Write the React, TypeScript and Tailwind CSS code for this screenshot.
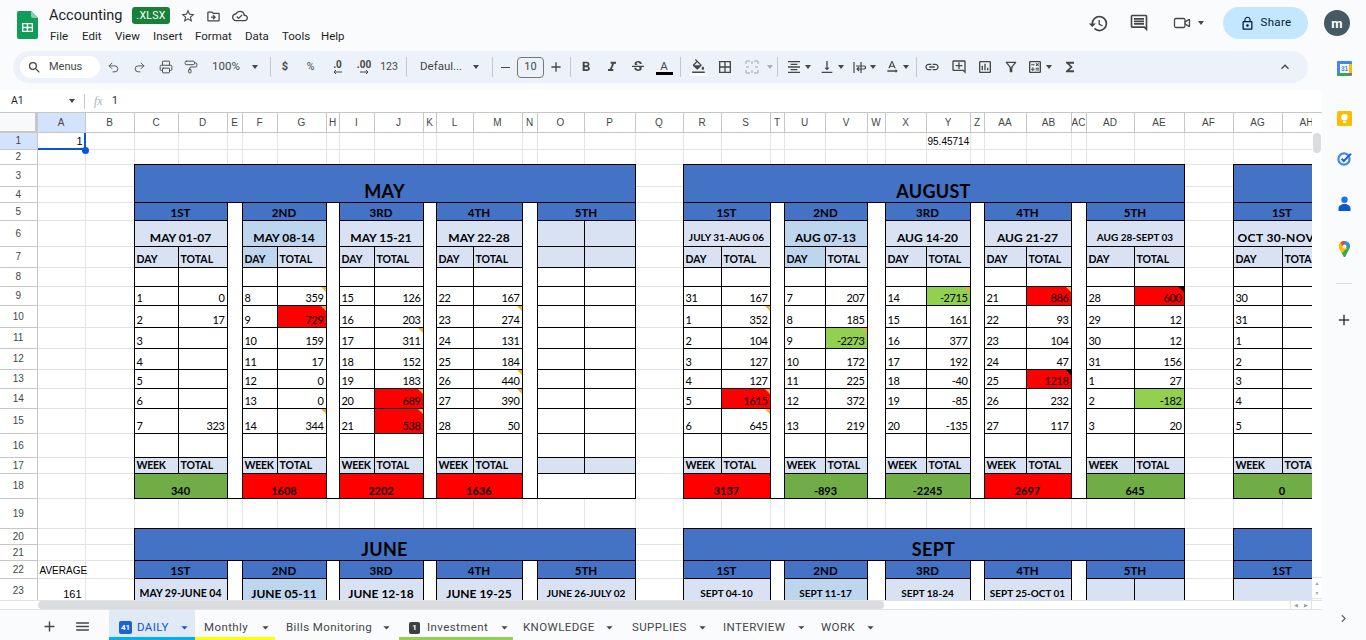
import type { ReactNode } from "react";
import { PaintRoller, Printer, Redo2, Undo2, Video } from "lucide-react";
import {
  MdAdd,
  MdArrowDropDown,
  MdBorderAll,
  MdChevronRight,
  MdExpandLess,
  MdFormatAlignCenter,
  MdFormatBold,
  MdFormatColorFill,
  MdFormatItalic,
  MdFunctions,
  MdHistory,
  MdLink,
  MdLockOutline,
  MdMenu,
  MdOutlineAddComment,
  MdOutlineCalculate,
  MdOutlineCloudDone,
  MdOutlineComment,
  MdOutlineDriveFileMove,
  MdOutlineFilterAlt,
  MdOutlineInsertChart,
  MdSearch,
  MdStarBorder,
  MdStrikethroughS,
  MdTextRotationNone,
  MdVerticalAlignBottom,
} from "react-icons/md";

const COLS = "A B C D E F G H I J K L M N O P Q R S T U V W X Y Z AA AB AC AD AE AF AG AH".split(" ");
const WIDTHS = [
  "w-[48px]", "w-[49px]", "w-[44px]", "w-[49px]", "w-[15px]", "w-[35px]", "w-[49px]", "w-[13px]", "w-[35px]",
  "w-[49px]", "w-[13px]", "w-[37px]", "w-[49px]", "w-[15px]", "w-[47px]", "w-[51px]", "w-[48px]", "w-[38px]",
  "w-[49px]", "w-[14px]", "w-[41px]", "w-[42px]", "w-[18px]", "w-[41px]", "w-[44px]", "w-[14px]", "w-[42px]",
  "w-[45px]", "w-[15px]", "w-[48px]", "w-[50px]", "w-[49px]", "w-[49px]", "w-[49px]",
];
const ROW_H: Record<number, string> = {
  1: "h-[17px]", 2: "h-[15px]", 3: "h-[22px]", 4: "h-[16px]", 5: "h-[18px]", 6: "h-[26px]", 7: "h-[21px]", 8: "h-[19px]",
  9: "h-[19px]", 10: "h-[22px]", 11: "h-[21px]", 12: "h-[21px]", 13: "h-[19px]", 14: "h-[20px]", 15: "h-[25px]",
  16: "h-[24px]", 17: "h-[16px]", 18: "h-[25px]", 19: "h-[30px]", 20: "h-[16px]", 21: "h-[16px]", 22: "h-[18px]", 23: "h-[24px]",
};

const BLUE = "bg-[#4472c4]";
const PALE = "bg-[#d9e2f3]";
const ALT = "bg-[#bdd6ee]";
const box = "border border-double border-black p-0 overflow-hidden";
const light = "border border-solid border-[#e2e3e3] p-0 align-bottom";

type Total = { v: string; f?: string; m?: string };
type Week = {
  head: string;
  date?: string;
  dateSize?: string;
  alt?: boolean;
  days?: string[];
  totals?: Total[];
  sum?: string;
  sumBg?: string;
  blank?: boolean;
};

const n = (v: string, m?: string): Total => ({ v, m });
const red = (v: string, m?: string): Total => ({ v, f: "bg-[#ff0000]", m });
const lime = (v: string, m?: string): Total => ({ v, f: "bg-[#92d050]", m });
const RED = "bg-[#ff0000]";
const GREEN = "bg-[#70ad47]";
const range = (a: number) => Array.from({ length: 7 }, (_, i) => String(a + i));

const MAY: Week[] = [
  { head: "1ST", date: "MAY 01-07", days: range(1), totals: [n("0"), n("17"), n(""), n(""), n(""), n(""), n("323")], sum: "340", sumBg: GREEN },
  { head: "2ND", date: "MAY 08-14", alt: true, days: range(8), totals: [n("359", "o"), red("729", "o"), n("159"), n("17"), n("0"), n("0"), n("344", "o")], sum: "1608", sumBg: RED },
  { head: "3RD", date: "MAY 15-21", days: range(15), totals: [n("126"), n("203"), n("311", "o"), n("152"), n("183"), red("689", "o"), red("538", "o")], sum: "2202", sumBg: RED },
  { head: "4TH", date: "MAY 22-28", days: range(22), totals: [n("167"), n("274", "o"), n("131"), n("184"), n("440", "o"), n("390", "o"), n("50")], sum: "1636", sumBg: RED },
  { head: "5TH", blank: true },
];
const AUGUST: Week[] = [
  { head: "1ST", date: "JULY 31-AUG 06", dateSize: "text-[10px]", days: ["31", "1", "2", "3", "4", "5", "6"], totals: [n("167"), n("352", "o"), n("104"), n("127"), n("127"), red("1615", "o"), n("645", "o")], sum: "3137", sumBg: RED },
  { head: "2ND", date: "AUG 07-13", alt: true, days: range(7), totals: [n("207"), n("185"), lime("-2273", "o"), n("172"), n("225"), n("372"), n("219")], sum: "-893", sumBg: GREEN },
  { head: "3RD", date: "AUG 14-20", days: range(14), totals: [lime("-2715", "o"), n("161"), n("377"), n("192"), n("-40"), n("-85"), n("-135")], sum: "-2245", sumBg: GREEN },
  { head: "4TH", date: "AUG 21-27", days: range(21), totals: [red("886", "o"), n("93"), n("104"), n("47"), red("1218", "k"), n("232"), n("117")], sum: "2697", sumBg: RED },
  { head: "5TH", date: "AUG 28-SEPT 03", dateSize: "text-[10px]", days: ["28", "29", "30", "31", "1", "2", "3"], totals: [red("600", "k"), n("12"), n("12"), n("156"), n("27"), lime("-182"), n("20")], sum: "645", sumBg: GREEN },
];
const OCT: Week[] = [
  { head: "1ST", date: "OCT 30-NOV", dateSize: "text-[12px] text-left pl-[4px] tracking-[0.4px]", days: ["30", "31", "1", "2", "3", "4", "5"], totals: [n(""), n(""), n(""), n(""), n(""), n(""), n("")], sum: "0", sumBg: GREEN },
];
const JUNE: Week[] = [
  { head: "1ST", date: "MAY 29-JUNE 04", dateSize: "text-[10.5px]" },
  { head: "2ND", date: "JUNE 05-11", alt: true },
  { head: "3RD", date: "JUNE 12-18" },
  { head: "4TH", date: "JUNE 19-25" },
  { head: "5TH", date: "JUNE 26-JULY 02", dateSize: "text-[10px]" },
];
const SEPT: Week[] = [
  { head: "1ST", date: "SEPT 04-10", dateSize: "text-[10px]" },
  { head: "2ND", date: "SEPT 11-17", dateSize: "text-[10px]", alt: true },
  { head: "3RD", date: "SEPT 18-24", dateSize: "text-[10px]" },
  { head: "4TH", date: "SEPT 25-OCT 01", dateSize: "text-[10px]" },
  { head: "5TH", blank: true },
];
const NEXT: Week[] = [{ head: "1ST", date: "" }];

function Mark({ kind }: { kind?: string }) {
  if (kind === "o")
    return <span className="absolute top-0 right-0 border-t-[5px] border-l-[5px] border-t-[#f5b324] border-l-transparent" />;
  if (kind === "k")
    return <span className="absolute top-0 right-0 border-t-[5px] border-l-[5px] border-t-black border-l-transparent" />;
  return null;
}

// one table row of a month block; top blocks run rows 3-18, bottom blocks 20-23
function blockCells(title: string, span: number, weeks: Week[], row: number, bottom: boolean): ReactNode[] {
  const r = bottom ? row - 17 : row;
  const out: ReactNode[] = [];
  if (r === 3) {
    out.push(
      <td key="title" colSpan={span} rowSpan={2} className={`${box} ${BLUE} align-bottom text-center`}>
        <div className="font-bold text-[18px] leading-[21px] text-black tracking-[0.3px]">{title}</div>
      </td>,
    );
    return out;
  }
  if (r === 4) return out;

  weeks.forEach((w, i) => {
    const k = `w${i}-`;
    if (r === 5) {
      out.push(
        <td key={k + "h"} colSpan={2} className={`${box} ${BLUE} text-center align-bottom pb-[2px] font-bold text-[11.5px] leading-none text-black`}>
          {w.head}
        </td>,
      );
      if (i < weeks.length - 1) out.push(<td key={k + "g"} rowSpan={bottom ? 2 : 14} className={`${box} bg-white`} />);
    } else if (r === 6) {
      const bg = w.alt ? ALT : PALE;
      if (w.blank) {
        out.push(<td key={k + "a"} className={`${box} ${PALE}`} />, <td key={k + "b"} className={`${box} ${PALE}`} />);
      } else {
        out.push(
          <td key={k + "d"} colSpan={2} className={`${box} ${bg} align-bottom text-center`}>
            <div className={`font-bold ${w.dateSize ?? "text-[12px]"} leading-[13px] pb-[2px] whitespace-nowrap text-black`}>{w.date}</div>
          </td>,
        );
      }
    } else if (r === 7) {
      if (w.blank) {
        out.push(<td key={k + "a"} className={`${box} ${PALE}`} />, <td key={k + "b"} className={`${box} ${PALE}`} />);
      } else {
        out.push(
          <td key={k + "a"} className={`${box} ${w.alt ? ALT : PALE} align-bottom pl-[2px] font-bold text-[10.5px] leading-[13px] pb-[1px] text-black`}>DAY</td>,
          <td key={k + "b"} className={`${box} ${PALE} align-bottom pl-[2px] font-bold text-[10.5px] leading-[13px] pb-[1px] text-black whitespace-nowrap`}>TOTAL</td>,
        );
      }
    } else if (r === 8 || r === 16) {
      out.push(<td key={k + "a"} className={`${box} bg-white`} />, <td key={k + "b"} className={`${box} bg-white`} />);
    } else if (r >= 9 && r <= 15) {
      const t = w.totals?.[r - 9];
      out.push(
        <td key={k + "a"} className={`${box} bg-white align-bottom pl-[2px] text-[11px] leading-[13px] pb-[1px] tracking-[-0.4px] text-black`}>{w.days?.[r - 9]}</td>,
        <td key={k + "b"} className={`${box} ${t?.f ?? "bg-white"} relative align-bottom text-right pr-[2px] text-[11px] leading-[13px] pb-[1px] tracking-[-0.4px] text-black`}>
          {t?.v}
          <Mark kind={t?.m} />
        </td>,
      );
    } else if (r === 17) {
      if (w.blank) {
        out.push(<td key={k + "a"} className={`${box} ${PALE}`} />, <td key={k + "b"} className={`${box} ${PALE}`} />);
      } else {
        out.push(
          <td key={k + "a"} className={`${box} ${PALE} pl-[2px] font-bold text-[10.5px] leading-none tracking-[-0.3px] text-black`}>WEEK</td>,
          <td key={k + "b"} className={`${box} ${PALE} pl-[2px] font-bold text-[10.5px] leading-none text-black whitespace-nowrap`}>TOTAL</td>,
        );
      }
    } else if (r === 18) {
      out.push(
        <td key={k + "s"} colSpan={2} className={`${box} ${w.sumBg ?? "bg-white"} align-bottom text-center font-bold text-[11px] leading-[13px] pb-[1px] text-black`}>
          {w.sum}
        </td>,
      );
    }
  });
  return out;
}

function lightCells(from: number, to: number, row: number): ReactNode[] {
  return COLS.slice(from, to).map((c) => {
    let content: ReactNode = null;
    if (row === 1 && c === "A") content = <div className="text-right pr-[2px] pb-[2px] text-[11px] text-black leading-none">1</div>;
    if (row === 1 && c === "Y") content = <div className="text-[10px] leading-none pb-[2px] pl-[1px] text-black whitespace-nowrap">95.45714</div>;
    if (row === 22 && c === "A") content = <div className="text-[10px] leading-none pb-[2px] pl-[2px] text-black">AVERAGE</div>;
    if (row === 23 && c === "A") content = <div className="text-right pr-[3px] pb-[2px] text-[11px] text-black leading-none">161</div>;
    const selected = row === 1 && c === "A";
    return (
      <td key={c} className={`${light} ${selected ? "relative" : ""} font-['Liberation_Sans',sans-serif]`}>
        {content}
        {selected && (
          <>
            <span className="absolute -right-px -bottom-px top-0 left-0 border-r-2 border-b-2 border-[#0b57d0]" />
            <span className="absolute -right-[4px] -bottom-[5px] w-[7px] h-[7px] rounded-full bg-[#0b57d0]" />
          </>
        )}
      </td>
    );
  });
}

function Grid() {
  const rows = Array.from({ length: 23 }, (_, i) => i + 1);
  return (
    <table className="table-fixed border-collapse w-[1331px] font-['Lato',sans-serif]">
      <colgroup>
        <col className="w-[37px]" />
        {WIDTHS.map((w, i) => (
          <col key={i} className={w} />
        ))}
      </colgroup>
      <tbody>
        <tr className="h-[20px]">
          <td className="p-0 bg-[#f8f9fa] border-t border-[#c7c7c7] shadow-[inset_-2px_-2px_0_#c7c7c7]" />
          {COLS.map((c) => (
            <td
              key={c}
              className={`p-0 border border-[#c7c7c7] text-center text-[10px] leading-none font-['Liberation_Sans',sans-serif] text-[#444746] overflow-hidden ${c === "A" ? "bg-[#d3e3fd]" : "bg-white"}`}
            >
              {c}
            </td>
          ))}
        </tr>
        {rows.map((r) => {
          const head = (
            <td
              key="head"
              className={`p-0 border-r border-b border-solid border-[#c7c7c7] text-center text-[10px] leading-none font-['Liberation_Sans',sans-serif] text-[#444746] ${r === 1 ? "bg-[#d3e3fd]" : "bg-white"}`}
            >
              {r}
            </td>
          );
          if (r <= 2 || r === 19) {
            return (
              <tr key={r} className={ROW_H[r]}>
                {head}
                {lightCells(0, 34, r)}
              </tr>
            );
          }
          const bottom = r >= 20;
          return (
            <tr key={r} className={ROW_H[r]}>
              {head}
              {lightCells(0, 2, r)}
              {blockCells(bottom ? "JUNE" : "MAY", 14, bottom ? JUNE : MAY, r, bottom)}
              {lightCells(16, 17, r)}
              {blockCells(bottom ? "SEPT" : "AUGUST", 14, bottom ? SEPT : AUGUST, r, bottom)}
              {lightCells(31, 32, r)}
              {blockCells("", 2, bottom ? NEXT : OCT, r, bottom)}
            </tr>
          );
        })}
      </tbody>
    </table>
  );
}

function Caret({ className = "" }: { className?: string }) {
  return <span className={`inline-block border-x-[3.5px] border-t-[4px] border-x-transparent border-t-[#444746] ${className}`} />;
}

function Tool({ w, children, ml = "" }: { w: string; children?: ReactNode; ml?: string }) {
  return <div className={`${w} ${ml} h-full flex items-center justify-center shrink-0 text-[#444746]`}>{children}</div>;
}

function Sep({ w }: { w: string }) {
  return (
    <div className={`${w} h-full flex items-center justify-center shrink-0`}>
      <span className="w-px h-[20px] bg-[#c7c7c7]" />
    </div>
  );
}

function Toolbar() {
  const ic = 16;
  return (
    <div className="ml-[13px] w-[1295px] h-[32px] rounded-[16px] bg-[#edf2fa] flex items-center text-[#444746]">
      <div className="ml-[7px] w-[80px] h-[22px] rounded-[11px] bg-white flex items-center shrink-0">
        <MdSearch size={15} className="ml-[7px] text-[#444746]" />
        <span className="ml-[7px] text-[11px] text-[#444746]">Menus</span>
      </div>
      <Tool w="w-[27px]"><Undo2 size={13} strokeWidth={1.6} /></Tool>
      <Tool w="w-[25px]"><Redo2 size={13} strokeWidth={1.6} /></Tool>
      <Tool w="w-[27px]"><Printer size={14} strokeWidth={1.6} /></Tool>
      <Tool w="w-[24px]"><PaintRoller size={14} strokeWidth={1.6} /></Tool>
      <div className="w-[64px] h-full flex items-center shrink-0 pl-[9px]">
        <span className="text-[11.5px]">100%</span>
        <Caret className="ml-[12px]" />
      </div>
      <Sep w="w-[6px]" />
      <Tool w="w-[24px]"><span className="text-[11px] font-bold">$</span></Tool>
      <Tool w="w-[27px]"><span className="text-[10.5px]">%</span></Tool>
      <Tool w="w-[27px]">
        <span className="flex flex-col items-center leading-none">
          <span className="text-[10px] font-bold leading-[9px]">.0</span>
          <svg width="9" height="6" viewBox="0 0 9 6" fill="none" stroke="#444746" strokeWidth="1"><path d="M9 3H1M3 1 1 3l2 2" /></svg>
        </span>
      </Tool>
      <Tool w="w-[26px]">
        <span className="flex flex-col items-center leading-none">
          <span className="text-[10px] font-bold leading-[9px]">.00</span>
          <svg width="9" height="6" viewBox="0 0 9 6" fill="none" stroke="#444746" strokeWidth="1"><path d="M0 3h8M6 1l2 2-2 2" /></svg>
        </span>
      </Tool>
      <Tool w="w-[24px]"><span className="text-[10.5px]">123</span></Tool>
      <Sep w="w-[10px]" />
      <div className="w-[77px] h-full flex items-center shrink-0 pl-[9px]">
        <span className="text-[11.5px] w-[42px]">Defaul...</span>
        <Caret className="ml-[11px]" />
      </div>
      <Sep w="w-[9px]" />
      <Tool w="w-[16px]"><span className="w-[9px] h-px bg-[#444746]" /></Tool>
      <div className="ml-[4px] w-[27px] h-[21px] rounded-[4px] border border-[#747775] flex items-center justify-center text-[11px] shrink-0">10</div>
      <Tool w="w-[24px]"><MdAdd size={ic} /></Tool>
      <Sep w="w-[5px]" />
      <Tool w="w-[26px]"><MdFormatBold size={ic} /></Tool>
      <Tool w="w-[26px]"><MdFormatItalic size={ic} /></Tool>
      <Tool w="w-[26px]"><MdStrikethroughS size={ic} /></Tool>
      <Tool w="w-[26px]">
        <span className="flex flex-col items-center">
          <span className="text-[11.5px] leading-[12px]">A</span>
          <span className="w-[17px] h-[3px] bg-black" />
        </span>
      </Tool>
      <Sep w="w-[7px]" />
      <Tool w="w-[28px]">
        <span className="flex flex-col items-center">
          <MdFormatColorFill size={15} className="-mb-[1px]" />
          <span className="w-[18px] h-[3px] bg-white" />
        </span>
      </Tool>
      <Tool w="w-[26px]"><MdBorderAll size={ic} /></Tool>
      <Tool w="w-[27px]">
        <svg width="14" height="14" viewBox="0 0 14 14" fill="none" stroke="#a3a7ab" strokeWidth="1">
          <path d="M1 4V1h4M9 1h4v3M1 10v3h4M9 13h4v-3M1 7h3M10 7h3M7 1v3M7 10v3" />
        </svg>
      </Tool>
      <Tool w="w-[9px]"><Caret className="opacity-40" /></Tool>
      <Sep w="w-[7px]" />
      <Tool w="w-[20px]" ml="ml-[3px]"><MdFormatAlignCenter size={ic} /></Tool>
      <Tool w="w-[8px]"><Caret /></Tool>
      <Tool w="w-[20px]" ml="ml-[5px]"><MdVerticalAlignBottom size={ic} /></Tool>
      <Tool w="w-[8px]"><Caret /></Tool>
      <Tool w="w-[20px]" ml="ml-[4px]">
        <svg width="13" height="13" viewBox="0 0 13 13" fill="none" stroke="#444746" strokeWidth="1.2">
          <path d="M1 1v11M8 1v11" />
          <path d="M3 5h8a1.500 1.500 0 0 1 0 3H4M6 6 4 8l2 2" />
        </svg>
      </Tool>
      <Tool w="w-[8px]"><Caret /></Tool>
      <Tool w="w-[20px]" ml="ml-[5px]"><MdTextRotationNone size={ic} /></Tool>
      <Tool w="w-[8px]"><Caret /></Tool>
      <Sep w="w-[13px]" />
      <Tool w="w-[18px]"><MdLink size={ic} /></Tool>
      <Tool w="w-[35px]"><MdOutlineAddComment size={ic} /></Tool>
      <Tool w="w-[17px]"><MdOutlineInsertChart size={ic} /></Tool>
      <Tool w="w-[29px]" ml="ml-[3px]"><MdOutlineFilterAlt size={ic} /></Tool>
      <Tool w="w-[20px]"><MdOutlineCalculate size={ic} /></Tool>
      <Tool w="w-[8px]"><Caret /></Tool>
      <Tool w="w-[34px]"><MdFunctions size={ic} /></Tool>
      <Tool w="w-[16px]" ml="ml-auto mr-[15px]"><MdExpandLess size={18} /></Tool>
    </div>
  );
}

function SheetsLogo() {
  return (
    <svg width="21" height="28" viewBox="0 0 21 28" className="shrink-0">
      <path d="M2 0h12l7 7v19a2 2 0 0 1-2 2H2a2 2 0 0 1-2-2V2a2 2 0 0 1 2-2z" fill="#0f9d58" />
      <path d="M14 0l7 7h-5a2 2 0 0 1-2-2z" fill="#87ceac" />
      <path d="M5 12h11v9H5z" fill="#fff" />
      <path d="M6.300 13.300h3.500v2.500H6.300zM11.200 13.300h3.500v2.500h-3.500zM6.300 17.200h3.500v2.500H6.300zM11.200 17.200h3.500v2.500h-3.500z" fill="#0f9d58" />
    </svg>
  );
}

function TopBar() {
  const menu: [string, string][] = [
    ["File", "w-[32px]"],
    ["Edit", "w-[33px]"],
    ["View", "w-[38px]"],
    ["Insert", "w-[42px]"],
    ["Format", "w-[50px]"],
    ["Data", "w-[37px]"],
    ["Tools", "w-[39px]"],
    ["Help", "w-[40px]"],
  ];
  return (
    <div className="h-[51px] flex shrink-0 text-[#1f1f1f]">
      <div className="ml-[17px] mt-[11px]"><SheetsLogo /></div>
      <div className="ml-[11px] flex flex-col">
        <div className="h-[29px] flex items-center pt-[3px]">
          <span className="w-[72px] text-[14.5px] leading-none whitespace-nowrap">Accounting</span>
          <span className="ml-[11px] w-[38px] h-[17px] -mt-[1px] rounded-[3px] bg-[#188038] text-white text-[10.5px] flex items-center justify-center tracking-[0.3px]">.XLSX</span>
          <MdStarBorder size={16} className="ml-[10px] text-[#444746]" />
          <MdOutlineDriveFileMove size={15} className="ml-[10px] text-[#444746]" />
          <MdOutlineCloudDone size={16} className="ml-[11px] text-[#444746]" />
        </div>
        <div className="flex items-center h-[16px] ml-[1px]">
          {menu.map(([m, w]) => (
            <span key={m} className={`${w} text-[11.5px] leading-none shrink-0`}>{m}</span>
          ))}
        </div>
      </div>
      <div className="ml-auto flex items-start pt-[7px] pr-[16px]">
        <div className="h-[32px] flex items-center text-[#444746]">
          <MdHistory size={21} />
          <MdOutlineComment size={20} className="ml-[20px]" />
          <span className="ml-[21px] w-[23px] flex items-center justify-center">
            <Video size={18} strokeWidth={1.7} />
          </span>
          <Caret className="ml-[5px]" />
        </div>
        <div className="ml-[19px] w-[85px] h-[32px] rounded-[16px] bg-[#c2e7ff] flex items-center justify-center text-[#001d35]">
          <MdLockOutline size={15} />
          <span className="ml-[6px] text-[11.5px] tracking-[0.3px]">Share</span>
        </div>
        <div className="ml-[16px] mt-[3px] w-[26px] h-[26px] rounded-full bg-[#455a64] flex items-center justify-center text-white font-bold text-[13px] leading-none">m</div>
      </div>
    </div>
  );
}

function FormulaBar() {
  return (
    <div className="mt-[7px] h-[22px] bg-white flex items-center shrink-0 text-[#1f1f1f]">
      <span className="ml-[11px] w-[55px] text-[10.5px] leading-none">A1</span>
      <Caret className="ml-[3px]" />
      <span className="ml-[9px] w-px h-[15px] bg-[#c7c7c7]" />
      <span className="ml-[9px] w-[18px] text-[12px] italic text-[#b0b3b8] font-['Liberation_Serif',serif] leading-none">fx</span>
      <span className="text-[10.5px] leading-none">1</span>
    </div>
  );
}

type Tab = { name: string; w: string; bar?: string; active?: boolean; icon?: ReactNode; pl: string; gap: string };

function Tabs() {
  const tabs: Tab[] = [
    {
      name: "DAILY", w: "w-[86px]", bar: "bg-[#00b0f0]", active: true, pl: "pl-[10px]", gap: "ml-[8px]",
      icon: <span className="w-[13px] h-[13px] mr-[5px] rounded-[2px] bg-[#1a63d6] text-white text-[8px] font-bold flex items-center justify-center leading-none">41</span>,
    },
    { name: "Monthly", w: "w-[80px]", bar: "bg-[#ffff00]", pl: "pl-[9px]", gap: "ml-[10px]" },
    { name: "Bills Monitoring", w: "w-[124px]", pl: "pl-[11px]", gap: "ml-[7px]" },
    {
      name: "Investment", w: "w-[114px]", bar: "bg-[#92d050]", pl: "pl-[10px]", gap: "ml-[9px]",
      icon: <span className="w-[11px] h-[12px] mr-[7px] rounded-[2px] bg-[#3c4043] text-white text-[8px] font-bold flex items-center justify-center leading-none">1</span>,
    },
    { name: "KNOWLEDGE", w: "w-[108px]", pl: "pl-[10px]", gap: "ml-[7px]" },
    { name: "SUPPLIES", w: "w-[91px]", pl: "pl-[11px]", gap: "ml-[8px]" },
    { name: "INTERVIEW", w: "w-[97px]", pl: "pl-[11px]", gap: "ml-[9px]" },
    { name: "WORK", w: "w-[71px]", pl: "pl-[12px]", gap: "ml-[8px]" },
  ];
  return (
    <div className="h-[30px] flex shrink-0 text-[#444746]">
      <div className="w-[109px] h-full flex items-center shrink-0 pt-[2px]">
        <MdAdd size={17} className="ml-[41px]" />
        <MdMenu size={17} className="ml-[16px]" />
      </div>
      {tabs.map((t) => (
        <div key={t.name} className={`${t.w} ${t.pl} pt-[5px] relative flex items-center h-full shrink-0 ${t.active ? "bg-[#e1e9f7] text-[#0b57d0]" : ""}`}>
          {t.icon}
          <span className="text-[11.5px] leading-none tracking-[0.4px] whitespace-nowrap">{t.name}</span>
          <MdArrowDropDown size={15} className={t.gap} />
          {t.bar && <span className={`absolute left-0 right-0 bottom-0 h-[3px] ${t.bar}`} />}
        </div>
      ))}
    </div>
  );
}

function SidePanel() {
  return (
    <div className="w-[44px] shrink-0 flex flex-col items-center relative">
      <svg width="15" height="15" viewBox="0 0 15 15" className="mt-[10px]">
        <rect x="0" y="0" width="15" height="15" rx="1" fill="#4285f4" />
        <rect x="3" y="3" width="9" height="9" fill="#fff" />
        <path d="M0 12h12v3H1a1 1 0 0 1-1-1z" fill="#34a853" />
        <path d="M12 3h3v9h-3z" fill="#fbbc04" />
        <path d="M12 12h3l-3 3z" fill="#ea4335" />
        <text x="7.5" y="10" textAnchor="middle" fontSize="6.5" fontWeight="700" fill="#4285f4" fontFamily="Liberation Sans, sans-serif">31</text>
      </svg>
      <svg width="15" height="15" viewBox="0 0 15 15" className="mt-[35px]">
        <rect width="15" height="15" rx="1.5" fill="#fbbc04" />
        <circle cx="7.5" cy="6.3" r="3.2" fill="#fff" />
        <rect x="5.8" y="10.2" width="3.4" height="1.6" fill="#fff" />
      </svg>
      <svg width="15" height="15" viewBox="0 0 15 15" className="mt-[25px]">
        <circle cx="7" cy="8" r="5.6" fill="none" stroke="#4285f4" strokeWidth="2.2" />
        <path d="M4.6 7.8 6.8 10 14 2.6" fill="none" stroke="#1a63d6" strokeWidth="2" />
      </svg>
      <svg width="13" height="15" viewBox="0 0 13 15" className="mt-[30px]">
        <circle cx="6.5" cy="3.7" r="3.2" fill="#1a73e8" />
        <path d="M0.5 15v-2.3C.5 9.5 3.5 8 6.5 8s6 1.5 6 4.7V15z" fill="#0b57d0" />
      </svg>
      <svg width="11" height="16" viewBox="0 0 11 16" className="mt-[30px]">
        <path d="M5.5 0C2.5 0 0 2.4 0 5.4c0 1 .3 1.9.8 2.7l4 7.9h1.4l4-7.9c.5-.8.8-1.7.8-2.7C11 2.4 8.500 0 5.5 0z" fill="#34a853" />
        <path d="M.8 8.100C.3 7.300 0 6.400 0 5.400 0 3.800.7 2.300 1.800 1.300L8 7.400 5.600 9.600 3 12.300z" fill="#fbbc04" />
        <path d="M1.800 1.300C2.800.5 4.100 0 5.500 0l.3 3.700-1.400 1-1.200 1.100z" fill="#ea4335" />
        <path d="M5.500 0c3 0 5.500 2.400 5.500 5.400 0 .3 0 .6-.1.800L7.500 3.800 5.500 3z" fill="#4285f4" />
        <circle cx="5.500" cy="5.400" r="2" fill="#fff" />
      </svg>
      <span className="mt-[26px] w-[16px] h-px bg-[#dadce0]" />
      <MdAdd size={18} className="mt-[27px] text-[#3c4043]" />
      <MdChevronRight size={15} className="absolute left-[14px] top-[560px] text-[#5f6368]" />
    </div>
  );
}

export default function App() {
  return (
    <div className="w-[1366px] h-[640px] overflow-hidden bg-[#f9fbfd] flex flex-col font-['Roboto',sans-serif]">
      <TopBar />
      <div className="flex flex-1 min-h-0">
        <div className="w-[1322px] shrink-0 flex flex-col">
          <Toolbar />
          <FormulaBar />
          <div className="h-[488px] flex bg-white shrink-0">
            <div className="w-[1312px] h-full overflow-hidden">
              <Grid />
            </div>
            <div className="w-[10px] h-full flex flex-col items-center border-t border-[#c7c7c7]">
              <span className="mt-[20px] w-[8px] h-[20px] rounded-[4px] bg-[#dadce0]" />
              <span className="mt-auto mb-[1px] w-full h-[22px] border-y border-[#e2e3e3] flex flex-col items-center justify-around text-[5px] leading-none text-[#9aa0a6]">
                <span>▲</span>
                <span>▼</span>
              </span>
            </div>
          </div>
          <div className="h-[10px] bg-white border-y border-[#e2e3e3] flex items-center shrink-0">
            <span className="ml-[38px] w-[846px] h-[8px] rounded-[4px] bg-[#dadce0]" />
            <span className="ml-auto mr-[10px] w-[22px] h-full border-x border-[#e2e3e3] flex items-center justify-around text-[5px] leading-none text-[#9aa0a6]">
              <span>◀</span>
              <span>▶</span>
            </span>
          </div>
          <Tabs />
        </div>
        <SidePanel />
      </div>
    </div>
  );
}
